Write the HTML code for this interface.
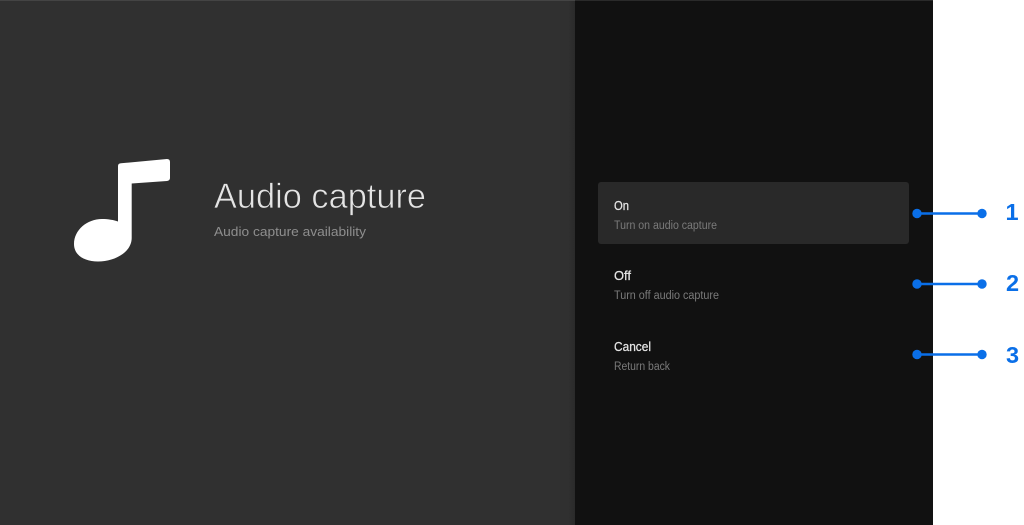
<!DOCTYPE html>
<html lang="en">
<head>
<meta charset="utf-8">
<title>Audio capture</title>
<style>
html,body{margin:0;padding:0;width:1024px;height:525px;overflow:hidden;background:#fff}
svg{display:block}
text{font-family:"Liberation Sans",Arial,sans-serif}
</style>
</head>
<body>
<svg width="1024" height="525" viewBox="0 0 1024 525" xmlns="http://www.w3.org/2000/svg">
<defs>
<linearGradient id="s" x1="0" x2="1" y1="0" y2="0">
<stop offset="0" stop-color="#303030"/>
<stop offset="1" stop-color="#2a2a2a"/>
</linearGradient>
<filter id="b" x="-5%" y="-20%" width="110%" height="140%"><feGaussianBlur stdDeviation="0.3"/></filter>
</defs>
<rect x="0" y="0" width="933" height="525" fill="#111111"/>
<rect x="0" y="0" width="575" height="525" fill="#303030"/>
<rect x="568" y="0" width="7" height="525" fill="url(#s)"/>
<rect x="0" y="0" width="575" height="1" fill="#444444"/>
<rect x="575" y="0" width="358" height="1" fill="#2a2a2a"/>
<path fill="#ffffff" d="M118 166Q118 163.5 121 163.3L167 159Q170 159 170 162L170 178Q170 180.5 167 181L131.7 183.5L131.7 238C131.7 252 115 261.5 98 261.5C84 261.5 74 255 74 244C74 230 87 219 102 219C108 219 114 220 118 221.5Z"/>
<g filter="url(#b)">
<text x="214" y="208" font-size="35" fill="#e4e4e4" stroke="#303030" stroke-width="0.7" textLength="212" lengthAdjust="spacingAndGlyphs">Audio capture</text>
<text x="214" y="236" font-size="13" fill="#8e8e8e" textLength="152" lengthAdjust="spacingAndGlyphs">Audio capture availability</text>
</g>
<rect x="598" y="182" width="311" height="62" rx="3" fill="#292929"/>
<g filter="url(#b)">
<text x="614" y="210" font-size="13" fill="#e6e6e6" stroke="#e6e6e6" stroke-width="0.25" textLength="15" lengthAdjust="spacingAndGlyphs">On</text>
<text x="614" y="229" font-size="11.5" fill="#7a7a7a" textLength="103" lengthAdjust="spacingAndGlyphs">Turn on audio capture</text>
<text x="614" y="280" font-size="13" fill="#e6e6e6" stroke="#e6e6e6" stroke-width="0.25" textLength="17" lengthAdjust="spacingAndGlyphs">Off</text>
<text x="614" y="299" font-size="11.5" fill="#7a7a7a" textLength="105" lengthAdjust="spacingAndGlyphs">Turn off audio capture</text>
<text x="614" y="351" font-size="13" fill="#e6e6e6" stroke="#e6e6e6" stroke-width="0.25" textLength="37" lengthAdjust="spacingAndGlyphs">Cancel</text>
<text x="614" y="370" font-size="11.5" fill="#7a7a7a" textLength="56" lengthAdjust="spacingAndGlyphs">Return back</text>
</g>
<g stroke="#0a6fe8" stroke-width="2.5" fill="#0a6fe8">
<line x1="917" y1="213.5" x2="982" y2="213.5"/>
<line x1="917" y1="284" x2="982" y2="284"/>
<line x1="917" y1="354.5" x2="982" y2="354.5"/>
</g>
<g fill="#0a6fe8">
<circle cx="917" cy="213.5" r="4.7"/><circle cx="982" cy="213.5" r="4.7"/>
<circle cx="917" cy="284" r="4.7"/><circle cx="982" cy="284" r="4.7"/>
<circle cx="917" cy="354.5" r="4.7"/><circle cx="982" cy="354.5" r="4.7"/>
</g>
<g fill="#0a6fe8" font-size="23.5" font-weight="700" text-anchor="middle">
<text x="1012" y="220">1</text>
<text x="1012.5" y="291">2</text>
<text x="1012.5" y="363">3</text>
</g>
</svg>
</body>
</html>
